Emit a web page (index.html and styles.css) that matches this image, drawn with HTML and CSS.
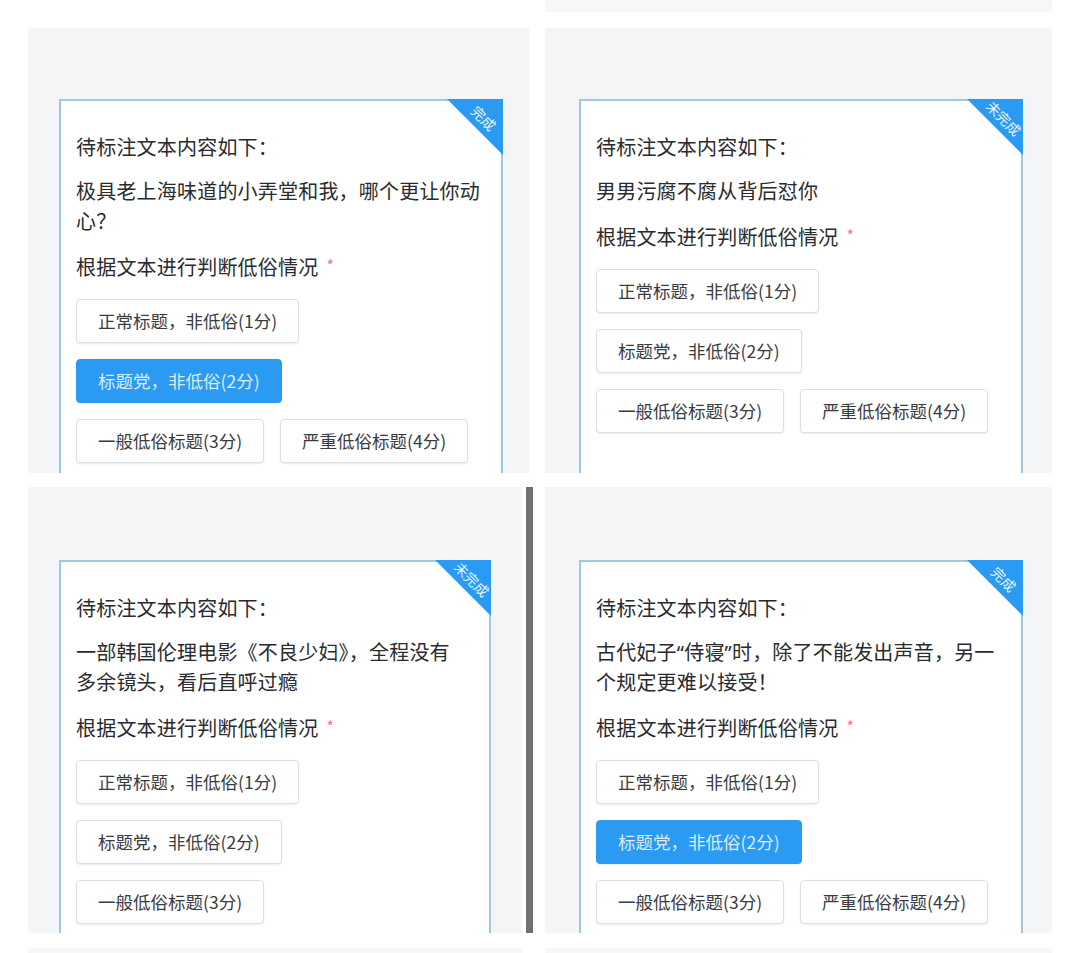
FILE: index.html
```html
<!DOCTYPE html>
<html lang="zh-CN">
<head>
    <meta charset="UTF-8">
    <meta name="viewport" content="width=device-width, initial-scale=1.0">
    <title>标注任务</title>
    <link rel="stylesheet" href="styles.css">
</head>
<body>
    <div class="sheet">
        <div class="row row-edge">
            <div class="edge edge-b"></div>
        </div>

        <div class="row row-top">
            <div class="panel panel-a">
                <div class="card">
                    <div class="ribbon"><span>完成</span></div>
                    <p class="title">待标注文本内容如下：</p>
                    <p class="text">极具老上海味道的小弄堂和我，哪个更让你动心？</p>
                    <p class="label">根据文本进行判断低俗情况<span class="star">*</span></p>
                    <div class="options">
                        <div class="opt-row"><span class="opt">正常标题，非低俗(1分)</span></div>
                        <div class="opt-row"><span class="opt active">标题党，非低俗(2分)</span></div>
                        <div class="opt-row"><span class="opt">一般低俗标题(3分)</span><span class="opt">严重低俗标题(4分)</span></div>
                    </div>
                </div>
            </div>
            <div class="panel panel-b">
                <div class="card">
                    <div class="ribbon"><span>未完成</span></div>
                    <p class="title">待标注文本内容如下：</p>
                    <p class="text">男男污腐不腐从背后怼你</p>
                    <p class="label">根据文本进行判断低俗情况<span class="star">*</span></p>
                    <div class="options">
                        <div class="opt-row"><span class="opt">正常标题，非低俗(1分)</span></div>
                        <div class="opt-row"><span class="opt">标题党，非低俗(2分)</span></div>
                        <div class="opt-row"><span class="opt">一般低俗标题(3分)</span><span class="opt">严重低俗标题(4分)</span></div>
                    </div>
                </div>
            </div>
        </div>

        <div class="row row-bottom">
            <div class="panel panel-c">
                <div class="card">
                    <div class="ribbon"><span>未完成</span></div>
                    <p class="title">待标注文本内容如下：</p>
                    <p class="text">一部韩国伦理电影《不良少妇》，全程没有多余镜头，看后直呼过瘾</p>
                    <p class="label">根据文本进行判断低俗情况<span class="star">*</span></p>
                    <div class="options">
                        <div class="opt-row"><span class="opt">正常标题，非低俗(1分)</span></div>
                        <div class="opt-row"><span class="opt">标题党，非低俗(2分)</span></div>
                        <div class="opt-row"><span class="opt">一般低俗标题(3分)</span></div>
                    </div>
                </div>
            </div>
            <div class="divider"></div>
            <div class="panel panel-d">
                <div class="card">
                    <div class="ribbon"><span>完成</span></div>
                    <p class="title">待标注文本内容如下：</p>
                    <p class="text">古代妃子“侍寝”时，除了不能发出声音，另一个规定更难以接受！</p>
                    <p class="label">根据文本进行判断低俗情况<span class="star">*</span></p>
                    <div class="options">
                        <div class="opt-row"><span class="opt">正常标题，非低俗(1分)</span></div>
                        <div class="opt-row"><span class="opt active">标题党，非低俗(2分)</span></div>
                        <div class="opt-row"><span class="opt">一般低俗标题(3分)</span><span class="opt">严重低俗标题(4分)</span></div>
                    </div>
                </div>
            </div>
        </div>

        <div class="row row-edge row-end">
            <div class="edge edge-c"></div>
            <div class="edge edge-d"></div>
        </div>
    </div>
</body>
</html>
```

FILE: styles.css
```css
*{
    margin: 0;
    padding: 0;
    box-sizing: border-box;
}
body{
    background: #fff;
    font-family: "Noto Sans CJK SC", "Noto Sans", sans-serif;
    color: #303133;
}
.sheet{
    width: 1080px;
    height: 953px;
    overflow: hidden;
    display: flex;
    flex-direction: column;
}
.row{
    display: flex;
    flex-shrink: 0;
}

/* 上下露出的相邻截图边 */
.row-edge{
    height: 12px;
}
.row-end{
    margin-top: 15px;
}
.edge{
    background: #f6f7f8;
    height: 100%;
}
.edge-b{
    margin-left: 545px;
    width: 507px;
}
.edge-c{
    margin-left: 28px;
    width: 494px;
}
.edge-d{
    margin-left: 23px;
    width: 507px;
}

.row-top{
    margin-top: 16px;
    height: 445px;
}
.row-bottom{
    margin-top: 14px;
    height: 446px;
}

.panel{
    background: #f4f5f7;
    height: 100%;
    overflow: hidden;
}
.panel-a{
    margin-left: 28px;
    width: 501px;
}
.panel-b{
    margin-left: 16px;
    width: 507px;
}
.panel-c{
    margin-left: 28px;
    width: 494px;
}
.panel-d{
    margin-left: 12px;
    width: 507px;
}
.divider{
    margin-left: 4px;
    width: 7px;
    height: 100%;
    background: #707070;
}

.card{
    position: relative;
    background: #fff;
    border: 2px solid #9fc8e3;
    border-bottom: none;
    width: 444px;
    height: 500px;
    padding: 31px 14px 0 15px;
    display: flex;
    flex-direction: column;
    gap: 15px;
}
.panel-a .card{
    margin: 71px 0 0 31px;
}
.panel-b .card{
    margin: 71px 0 0 34px;
}
.panel-c .card{
    margin: 73px 0 0 31px;
    width: 432px;
    padding-right: 24px;
}
.panel-d .card{
    margin: 73px 0 0 34px;
}

.title,
.text,
.label{
    font-size: 20px;
    line-height: 30px;
    letter-spacing: 0.2px;
    color: #2a2b2e;
}
/* 引号等西文标点走窄字形 */
.text{
    font-family: "Noto Sans", "Noto Sans CJK SC", sans-serif;
}
.star{
    color: #f07b7b;
    font-size: 16px;
    margin-left: 8px;
    position: relative;
    top: -3px;
}

.options{
    margin-top: 1px;
    display: flex;
    flex-direction: column;
    gap: 16px;
}
.opt-row{
    display: flex;
    gap: 16px;
}
.opt{
    display: inline-block;
    height: 44px;
    line-height: 42px;
    padding: 0 21px;
    font-size: 17.5px;
    color: #3a3b3e;
    background: #fff;
    border: 1px solid #dcdfe4;
    border-radius: 4px;
    box-shadow: 0 1px 2px rgba(0,0,0,0.08);
    white-space: nowrap;
}
.opt.active{
    background: #2b9af2;
    border-color: #2b9af2;
    color: #d9ecfc;
}

/* 右上角状态角标 */
.ribbon{
    position: absolute;
    top: -2px;
    right: -2px;
    width: 56px;
    height: 56px;
    background: #2b9af2;
    clip-path: polygon(0 0, 100% 0, 100% 100%);
}
.ribbon span{
    position: absolute;
    left: -3px;
    top: 11px;
    width: 80px;
    line-height: 16px;
    text-align: center;
    font-size: 14px;
    color: #eaf5ff;
    transform: rotate(45deg);
}
```
